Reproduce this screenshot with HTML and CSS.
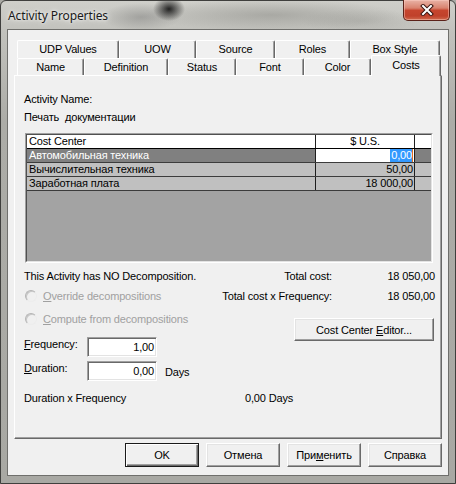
FILE: index.html
```html
<!DOCTYPE html>
<html>
<head>
<meta charset="utf-8">
<title>Activity Properties</title>
<link rel="stylesheet" href="styles.css">
</head>
<body>
<div class="window">
  <div class="titlebar">
    <span class="title">Activity Properties</span>
    <div class="close">
      <svg width="14" height="12" viewBox="0 0 14 12">
        <path d="M3 2 L11 10 M11 2 L3 10" stroke="#3a1510" stroke-width="4" stroke-linecap="square" fill="none"/>
        <path d="M3 2 L11 10 M11 2 L3 10" stroke="#ffffff" stroke-width="2" stroke-linecap="square" fill="none"/>
      </svg>
    </div>
  </div>
  <div class="client">
    <div class="tabs">
      <div class="tabrow row1">
        <div class="tab">UDP Values</div>
        <div class="tab">UOW</div>
        <div class="tab">Source</div>
        <div class="tab">Roles</div>
        <div class="tab">Box Style</div>
      </div>
      <div class="tabrow row2">
        <div class="tab">Name</div>
        <div class="tab">Definition</div>
        <div class="tab">Status</div>
        <div class="tab">Font</div>
        <div class="tab">Color</div>
        <div class="tab selected">Costs</div>
      </div>
    </div>
    <div class="panel">
      <div class="textline">Activity Name:</div>
      <div class="textline">Печать&nbsp; документации</div>
      <div class="grid">
        <div class="grid-inner">
          <div class="grow header">
            <div class="cell c1">Cost Center</div>
            <div class="cell c2 center">$ U.S.</div>
            <div class="cell c3"></div>
          </div>
          <div class="grow current">
            <div class="cell c1">Автомобильная техника</div>
            <div class="cell c2 edit num"><span class="sel">0,00</span><span class="caret"></span></div>
            <div class="cell c3"></div>
          </div>
          <div class="grow">
            <div class="cell c1">Вычислительная техника</div>
            <div class="cell c2 num">50,00</div>
            <div class="cell c3"></div>
          </div>
          <div class="grow">
            <div class="cell c1">Заработная плата</div>
            <div class="cell c2 num">18 000,00</div>
            <div class="cell c3"></div>
          </div>
        </div>
      </div>
      <div class="summary">
        <div class="left">
          <div class="line">This Activity has NO Decomposition.</div>
          <div class="radio"><span class="dot"></span><span><u>O</u>verride decompositions</span></div>
          <div class="radio second"><span class="dot"></span><span><u>C</u>ompute from decompositions</span></div>
          <div class="field first">
            <span class="flabel"><u>F</u>requency:</span>
            <div class="input">1,00</div>
          </div>
          <div class="field">
            <span class="flabel"><u>D</u>uration:</span>
            <div class="input">0,00</div>
            <span class="unit">Days</span>
          </div>
        </div>
        <div class="right">
          <div class="totals">
            <span class="tlabel">Total cost:</span><span class="tval">18 050,00</span>
            <span class="tlabel">Total cost x Frequency:</span><span class="tval">18 050,00</span>
          </div>
          <div class="btn editor"><span>Cost Center <u>E</u>ditor...</span></div>
        </div>
      </div>
      <div class="product">
        <span class="plabel">Duration x Frequency</span>
        <span>0,00 Days</span>
      </div>
    </div>
    <div class="buttons">
      <div class="btn default">OK</div>
      <div class="btn">Отмена</div>
      <div class="btn"><span>При<u>м</u>енить</span></div>
      <div class="btn">Справка</div>
    </div>
  </div>
</div>
</body>
</html>
```

FILE: styles.css
```css
* { box-sizing: border-box; }

html, body {
  margin: 0;
  padding: 0;
  width: 456px;
  height: 484px;
  overflow: hidden;
  background: #a9a9a4;
}

body {
  font-family: "Liberation Sans", Arial, sans-serif;
  font-size: 11px;
  letter-spacing: -0.15px;
  color: #000;
}

.window {
  width: 456px;
  height: 484px;
  border: 1px solid #3f3f3d;
  border-radius: 6px 6px 0 0;
  padding: 0 6px 7px 6px;
  display: flex;
  flex-direction: column;
  background:
    radial-gradient(ellipse 16px 12px at 168px 8px, rgba(15,15,15,0.9), rgba(15,15,15,0)),
    radial-gradient(ellipse 40px 14px at 140px 16px, rgba(90,90,90,0.35), rgba(90,90,90,0)),
    radial-gradient(ellipse 130px 16px at 270px 14px, rgba(120,120,115,0.4), rgba(120,120,115,0)),
    radial-gradient(ellipse 60px 12px at 360px 20px, rgba(150,150,145,0.35), rgba(150,150,145,0)),
    linear-gradient(to bottom, #cfcfca 0px, #c2c2bd 30px, #acaca7 120px, #a8a8a3 484px);
}

.titlebar {
  height: 28px;
  display: flex;
  align-items: center;
  padding-left: 1px;
}

.title {
  font-family: "Noto Sans", "Open Sans", sans-serif;
  font-size: 12px;
  color: #1a1a1a;
  text-shadow: 0 0 6px rgba(255,255,255,0.9), 0 0 3px rgba(255,255,255,0.8);
  letter-spacing: -0.1px;
}

.close {
  margin-left: auto;
  margin-right: -1px;
  align-self: flex-start;
  margin-top: -1px;
  width: 47px;
  height: 21px;
  border: 1px solid #5b2219;
  border-top: none;
  border-radius: 0 0 5px 5px;
  background: linear-gradient(to bottom, #e9b3a6 0%, #d9836f 40%, #c6452e 52%, #c0412b 80%, #d06a4e 100%);
  box-shadow: inset 0 0 0 1px rgba(255,210,200,0.45);
  display: flex;
  align-items: center;
  justify-content: center;
}

.client {
  height: 447px;
  border: 1px solid #6f6f6c;
  background: #f0f0f0;
  display: flex;
  flex-direction: column;
}

/* tabs */
.tabs {
  margin: 10px 0 0 9px;
}

.tabrow {
  display: grid;
}

.row1 {
  grid-template-columns: 102px 77px 79px 75px 90px;
  height: 18px;
}

.row2 {
  grid-template-columns: 67px 84px 68px 68px 67px 70px;
  height: 17px;
  align-items: end;
}

.tab {
  background: #f0f0f0;
  border-top: 1px solid #ffffff;
  border-left: 1px solid #ffffff;
  border-right: 1px solid #696969;
  box-shadow: inset -1px 0 0 #a0a0a0;
  border-radius: 2px 2px 0 0;
  display: flex;
  align-items: center;
  justify-content: center;
  height: 100%;
  padding-bottom: 1px;
}

.row2 .tab {
  height: 17px;
}

.tab.selected {
  position: relative;
  z-index: 1;
  height: 21px;
  margin: -3px 0 -1px 0;
  padding-bottom: 2px;
}

/* panel */
.panel {
  margin-left: 6px;
  width: 428px;
  height: 364px;
  border-top: 1px solid #ffffff;
  border-left: 1px solid #ffffff;
  border-right: 1px solid #696969;
  border-bottom: 1px solid #696969;
  box-shadow: inset -1px -1px 0 #a0a0a0;
  padding: 14px 6px 0 9px;
}

.textline {
  line-height: 18px;
  white-space: nowrap;
}

.grid {
  margin: 7px 0 0 1px;
  width: 408px;
  height: 130px;
  border: 1px solid;
  border-color: #a0a0a0 #ffffff #ffffff #a0a0a0;
}

.grid-inner {
  height: 100%;
  border: 1px solid;
  border-color: #505050 #e3e3e3 #e3e3e3 #505050;
  background: #a3a3a3;
}

.grow {
  display: grid;
  grid-template-columns: 289px 99px 1fr;
  height: 14px;
  background: #c0c0c0;
  border-bottom: 1px solid #3c3c3c;
}

.grow.header {
  background: #ffffff;
  border-bottom-color: #000;
}

.grow.current {
  background: #808080;
  color: #ffffff;
}

.cell {
  line-height: 13px;
  padding: 0 2px;
  white-space: nowrap;
  overflow: hidden;
}

.c1, .c2 {
  border-right: 1px solid #1e1e1e;
}

.center { text-align: center; }
.num { text-align: right; padding-right: 1px; }

.edit {
  background: #ffffff;
  color: #000;
  display: flex;
  justify-content: flex-end;
  align-items: stretch;
}

.sel {
  background: #3399ff;
  color: #ffffff;
  padding: 0 0 0 1px;
}

.caret {
  width: 1px;
  background: #e07020;
}

/* summary */
.summary {
  display: flex;
  margin-top: 3px;
}

.left {
  width: 190px;
  flex: none;
}

.line {
  line-height: 20px;
  white-space: nowrap;
}

.radio {
  display: flex;
  align-items: center;
  height: 20px;
  color: #a0a0a0;
  white-space: nowrap;
}

.radio.second {
  margin-top: 3px;
}

.dot {
  width: 12px;
  height: 12px;
  margin-left: 1px;
  margin-right: 6px;
  border-radius: 50%;
  border: 1px solid;
  border-color: #b4b4b4 #ececec #ececec #b4b4b4;
  background: #f0f0f0;
  box-shadow: inset 1px 1px 0 #c8c8c8;
}

.field {
  display: flex;
  align-items: flex-start;
  margin-top: 4px;
}

.field.first {
  margin-top: 8px;
}

.flabel {
  width: 63px;
  line-height: 13px;
  margin-top: 1px;
}

.input {
  width: 70px;
  height: 20px;
  border: 1px solid;
  border-color: #a0a0a0 #ffffff #ffffff #a0a0a0;
  box-shadow: inset 1px 1px 0 #696969, inset -1px -1px 0 #e3e3e3;
  background: #ffffff;
  text-align: right;
  padding-right: 2px;
  line-height: 18px;
}

.unit {
  margin-left: 8px;
  margin-top: 5px;
  line-height: 13px;
}

.right {
  flex: 1;
  min-width: 0;
  display: flex;
  flex-direction: column;
}

.totals {
  display: grid;
  grid-template-columns: 1fr 103px;
  line-height: 20px;
  text-align: right;
}

.tlabel, .tval {
  white-space: nowrap;
}

.btn {
  border: 1px solid;
  border-color: #ffffff #696969 #696969 #ffffff;
  box-shadow: inset -1px -1px 0 #a0a0a0, inset 1px 1px 0 #e3e3e3;
  background: #f0f0f0;
  display: flex;
  align-items: center;
  justify-content: center;
  white-space: nowrap;
}

.btn.editor {
  width: 140px;
  height: 23px;
  margin: 12px 1px 0 auto;
}

.product {
  display: flex;
  margin-top: 10px;
  line-height: 14px;
}

.plabel {
  width: 221px;
}

/* dialog buttons */
.buttons {
  display: flex;
  justify-content: flex-end;
  gap: 7px;
  margin-top: 4px;
  padding-right: 6px;
}

.buttons .btn {
  width: 74px;
  height: 24px;
}

.btn.default {
  border-color: #1a1a1a;
  box-shadow: inset 1px 1px 0 #ffffff, inset -1px -1px 0 #696969, inset -2px -2px 0 #a0a0a0;
}
```
